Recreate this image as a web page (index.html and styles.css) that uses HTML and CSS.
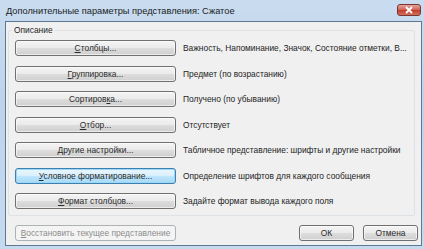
FILE: index.html
```html
<!DOCTYPE html>
<html lang="ru">
<head>
    <meta charset="UTF-8">
    <title>Дополнительные параметры представления: Сжатое</title>
    <link rel="stylesheet" href="styles.css">
</head>
<body>
    <div class="window">
        <div class="titlebar">
            <span class="title">Дополнительные параметры представления: Сжатое</span>
            <div class="close">
                <svg width="10" height="8" viewBox="0 0 10 8">
                    <path d="M2 1 L8 7 M8 1 L2 7" stroke="#fff" stroke-width="1.8" fill="none"/>
                </svg>
            </div>
        </div>
        <div class="client">
            <fieldset class="group">
                <legend>Описание</legend>
                <div class="rows">
                    <div class="row">
                        <button class="btn"><u>С</u>толбцы...</button>
                        <span class="desc">Важность, Напоминание, Значок, Состояние отметки, В...</span>
                    </div>
                    <div class="row">
                        <button class="btn"><u>Г</u>руппировка...</button>
                        <span class="desc">Предмет (по возрастанию)</span>
                    </div>
                    <div class="row">
                        <button class="btn">Сортиров<u>к</u>а...</button>
                        <span class="desc">Получено (по убыванию)</span>
                    </div>
                    <div class="row">
                        <button class="btn"><u>О</u>тбор...</button>
                        <span class="desc">Отсутствует</span>
                    </div>
                    <div class="row">
                        <button class="btn"><u>Д</u>ругие настройки...</button>
                        <span class="desc">Табличное представление: шрифты и другие настройки</span>
                    </div>
                    <div class="row">
                        <button class="btn default"><u>У</u>словное форматирование...</button>
                        <span class="desc">Определение шрифтов для каждого сообщения</span>
                    </div>
                    <div class="row">
                        <button class="btn"><u>Ф</u>ормат столбцов...</button>
                        <span class="desc">Задайте формат вывода каждого поля</span>
                    </div>
                </div>
            </fieldset>
            <div class="footer">
                <button class="btn disabled"><u>В</u>осстановить текущее представление</button>
                <div class="actions">
                    <button class="btn small">ОК</button>
                    <button class="btn small">Отмена</button>
                </div>
            </div>
        </div>
    </div>
</body>
</html>
```

FILE: styles.css
```css
* {
    margin: 0;
    padding: 0;
    box-sizing: border-box;
}

body {
    font-family: 'Liberation Sans', Arial, sans-serif;
    font-size: 8.4px;
    color: #1e1e1e;
    background: #c3d8ee;
}

.window {
    width: 424px;
    height: 249px;
    display: flex;
    flex-direction: column;
    background: linear-gradient(180deg, #c9dcf0 0%, #bed3ea 40%, #c6daef 100%);
}

.titlebar {
    height: 21px;
    display: flex;
    align-items: flex-start;
    justify-content: space-between;
    padding: 0 3px 0 6px;
}

.title {
    font-size: 9.25px;
    line-height: 10px;
    margin-top: 6px;
    color: #1b1b1b;
}

.close {
    width: 24px;
    height: 12px;
    margin-top: 4px;
    border: 1px solid #7a3434;
    border-radius: 3px;
    background: linear-gradient(180deg, #e6a59a 0%, #d0685a 45%, #c2402e 55%, #d2705e 100%);
    display: flex;
    align-items: center;
    justify-content: center;
}

.client {
    flex: 1;
    margin: 0 2px 3px 5px;
    border: 1px solid #5d7995;
    background: #f0f0f0;
    display: flex;
    flex-direction: column;
}

.group {
    margin: 3px 6px 0 2px;
    padding: 0 0 6px 3px;
    border: 1px solid #dde2e6;
    border-radius: 2px;
}

.group legend {
    padding: 0 2px;
    line-height: 10px;
    font-size: 8.4px;
}

.rows {
    display: flex;
    flex-direction: column;
    gap: 9.5px;
    padding-top: 5px;
}

.row {
    display: flex;
    align-items: center;
    gap: 7px;
}

.btn {
    width: 161px;
    height: 16px;
    margin-left: 3px;
    font-family: 'Liberation Sans', Arial, sans-serif;
    font-size: 8.4px;
    color: #2a2a2a;
    border: 1px solid #707070;
    border-radius: 3px;
    background: linear-gradient(180deg, #f4f4f4 0%, #ebebeb 48%, #dddddd 52%, #cfcfcf 100%);
    box-shadow: inset 0 0 0 1px rgba(255, 255, 255, 0.6);
}

.btn u {
    text-underline-offset: 1px;
}

.btn.default {
    border-color: #3c7fb1;
    background: linear-gradient(180deg, #eaf6fd 0%, #d9f0fc 48%, #bee6fd 52%, #a7d9f5 100%);
    box-shadow: inset 0 0 0 1px #9cd8f6;
}

.btn.disabled {
    border-color: #adb2b5;
    background: #f4f4f4;
    color: #8d8d8d;
    box-shadow: none;
}

.desc {
    white-space: nowrap;
}

.footer {
    display: flex;
    justify-content: space-between;
    align-items: flex-start;
    padding: 9px 3px 0 6px;
}

.actions {
    display: flex;
    gap: 9px;
}

.btn.small {
    width: 55px;
    margin-left: 0;
}
```
